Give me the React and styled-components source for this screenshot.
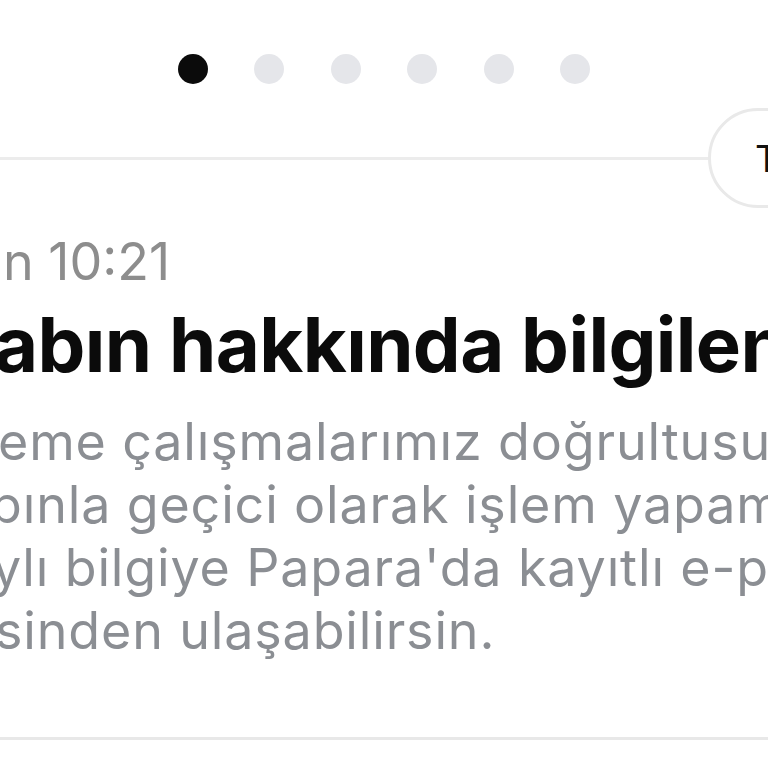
import React from 'react'
import styled, { createGlobalStyle } from 'styled-components'

const Global = createGlobalStyle`
  html, body {
    margin: 0;
    padding: 0;
    background: #fff;
  }
  body {
    font-family: Inter, "Noto Sans", sans-serif;
  }
`

const Screen = styled.div`
  width: 768px;
  height: 768px;
  overflow: hidden;
  background: #fff;
  padding-top: 54px;
  box-sizing: border-box;
`

const Dots = styled.div`
  display: flex;
  justify-content: center;
  gap: 46.5px;
`

const Dot = styled.span`
  width: 30px;
  height: 30px;
  border-radius: 50%;
  background: ${p => (p.$active ? '#0b0b0b' : '#e5e6ea')};
`

const DividerRow = styled.div`
  display: flex;
  align-items: center;
  margin-top: 24px;
  height: 100px;
`

const Line = styled.div`
  flex: none;
  width: 708px;
  height: 3px;
  background: #ececec;
`

const Pill = styled.div`
  flex: none;
  width: 220px;
  height: 100px;
  box-sizing: border-box;
  border: 3px solid #e9e9e9;
  border-radius: 50px;
  display: flex;
  align-items: center;
  padding-left: 44px;
  font-size: 37px;
  color: #111;
`

const Time = styled.div`
  margin-top: 22px;
  font-size: 52px;
  line-height: 63px;
  color: #8d8d8d;
  white-space: nowrap;
  padding-left: 3px;
`

const Title = styled.h1`
  margin: 5px 0 0 -6px;
  font-size: 76px;
  line-height: 92px;
  font-weight: 700;
  color: #0b0b0b;
  white-space: nowrap;
  letter-spacing: -0.6px;
`

const Body = styled.div`
  margin-top: 20px;
  font-size: 52px;
  line-height: 63px;
  color: #8b8e93;
  letter-spacing: 0.85px;
`

const BodyLine = styled.div`
  white-space: nowrap;
  margin-left: ${p => p.$shift || 0}px;
`

const Bottom = styled.div`
  margin-top: 75px;
  height: 3px;
  background: #e8e8e8;
`

const lines = [
  { text: 'eme çalışmalarımız doğrultusunda', shift: -2 },
  { text: 'bınla geçici olarak işlem yapamayacaksın.', shift: -10 },
  { text: "ylı bilgiye Papara'da kayıtlı e-posta", shift: -8 },
  { text: 'sinden ulaşabilirsin.', shift: -5 },
]

export default function App() {
  return (
    <Screen>
      <Global />
      <Dots>
        {[0, 1, 2, 3, 4, 5].map(i => (
          <Dot key={i} $active={i === 0} />
        ))}
      </Dots>
      <DividerRow>
        <Line />
        <Pill>T</Pill>
      </DividerRow>
      <Time>n 10:21</Time>
      <Title>abın hakkında bilgilendirme</Title>
      <Body>
        {lines.map(l => (
          <BodyLine key={l.text} $shift={l.shift}>{l.text}</BodyLine>
        ))}
      </Body>
      <Bottom />
    </Screen>
  )
}
